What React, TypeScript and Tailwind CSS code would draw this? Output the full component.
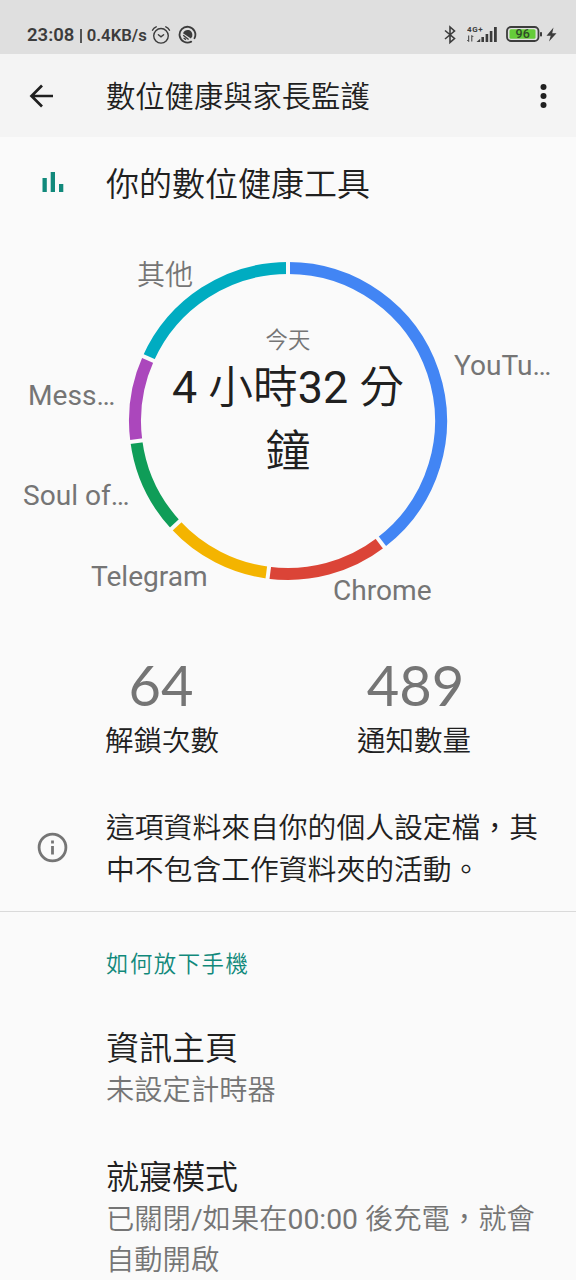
import React from 'react';

interface UsageSlice {
  name: string;
  color: string;
  start: number;
  end: number;
  labelClass: string;
}

// Angles are in degrees, clockwise from the top of the ring
const slices: UsageSlice[] = [
  { name: 'YouTu…', color: '#4285f4', start: 0, end: 142.6, labelClass: 'left-[454px] top-[117px]' },
  { name: 'Chrome', color: '#db4437', start: 142.6, end: 187.4, labelClass: 'left-[333px] top-[342px]' },
  { name: 'Telegram', color: '#f4b400', start: 187.4, end: 227.2, labelClass: 'left-[91px] top-[328px]' },
  { name: 'Soul of…', color: '#0f9d58', start: 227.2, end: 262.4, labelClass: 'left-[23px] top-[247px]' },
  { name: 'Mess…', color: '#ab47bc', start: 262.4, end: 294.1, labelClass: 'left-[28px] top-[147px]' },
  { name: '其他', color: '#00acc1', start: 294.1, end: 360, labelClass: 'left-[137px] top-[27px] font-[350]' },
];

const CENTER = 160;
const RADIUS = 153;

const pointAt = (deg: number, radius: number) => {
  const rad = (deg * Math.PI) / 180;
  return [CENTER + radius * Math.sin(rad), CENTER - radius * Math.cos(rad)];
};

const arcPath = (start: number, end: number) => {
  const [x1, y1] = pointAt(start, RADIUS);
  const [x2, y2] = pointAt(end, RADIUS);
  return `M${x1} ${y1}A${RADIUS} ${RADIUS} 0 ${end - start > 180 ? 1 : 0} 1 ${x2} ${y2}`;
};

const UsageRing: React.FC = () => (
  <svg width="320" height="320" viewBox="0 0 320 320" fill="none">
    {slices.map((slice) => (
      <path key={slice.name} d={arcPath(slice.start, slice.end)} stroke={slice.color} strokeWidth="12" />
    ))}
    {/* Gaps between the slices */}
    {slices.map((slice) => {
      const [x1, y1] = pointAt(slice.start, 144);
      const [x2, y2] = pointAt(slice.start, 162);
      return <line key={slice.name} x1={x1} y1={y1} x2={x2} y2={y2} stroke="#fafafa" strokeWidth="4" />;
    })}
  </svg>
);

const StatusBar: React.FC = () => (
  <div className="flex h-[54px] items-center justify-between bg-[#dfdfdf] pt-[15px] pr-[19px] pl-[27px] text-[#3c3c3c]">
    <div className="flex items-center">
      <span className="pt-[2px] text-[18.5px] font-semibold">23:08</span>
      <span className="ml-[6px] mt-[2px] h-[14px] w-[1.5px] bg-[#555]" />
      <span className="ml-[5px] pt-[3px] text-[16.7px] font-semibold">0.4KB/s</span>
      <svg className="ml-[4px]" width="20" height="20" viewBox="0 0 20 20" fill="none" stroke="currentColor" strokeWidth="1.4" strokeLinecap="round">
        <circle cx="10" cy="10.8" r="7.3" />
        <path d="M1.5 5.2C2.2 3.7 3.6 2.5 5.2 1.8M18.5 5.2C17.8 3.7 16.4 2.5 14.8 1.8M7.4 9.7L10 11.8L12.6 9.7" />
      </svg>
      <svg className="ml-[7px]" width="19" height="19" viewBox="0 0 19 19" fill="none" stroke="currentColor">
        <path d="M13.2 16.6A7.9 7.9 0 1 1 16.5 13.2" strokeWidth="1.8" strokeLinecap="round" />
        <path d="M5 8.2C6.2 5.6 8.4 4.6 10.6 5.1C13.4 5.8 14.8 8.4 14.2 11.6L12.9 13.4Z" fill="currentColor" stroke="none" />
        <path d="M5.2 10.2L10.6 14.6M5.6 13L8 14.6" strokeWidth="1.3" />
      </svg>
    </div>
    <div className="flex items-center">
      <svg width="12" height="20" viewBox="0 0 12 20" fill="none" stroke="currentColor" strokeWidth="1.6">
        <path d="M1 5.5L10.5 13.5L6 17.5V2L10.5 6L1 14" />
      </svg>
      <svg className="ml-[11px]" width="31" height="20" viewBox="0 0 31 20" fill="currentColor">
        <text x="0" y="6.8" fontSize="8" fontWeight="700" fontFamily="Roboto, sans-serif" textLength="15.5">4G+</text>
        <path d="M9.5 17L13.2 13.8V17ZM14.4 12H17V17H14.4ZM18.6 9H21.2V17H18.6ZM22.8 6H25.4V17H22.8ZM27 2H29.8V17H27Z" />
        <path d="M1.7 16.5V10.5M1.7 16.5L0.3 15M4.8 10.5V16.5M4.8 10.5L6.3 12" stroke="currentColor" strokeWidth="1" fill="none" />
      </svg>
      <svg className="ml-[8px]" width="37" height="18" viewBox="0 0 37 18">
        <rect x="1" y="1" width="31.5" height="14" rx="4" fill="none" stroke="currentColor" strokeWidth="1.8" />
        <rect x="3.5" y="3.3" width="26" height="9.4" rx="1.5" fill="#65cc39" />
        <rect x="34" y="6" width="2" height="4.5" rx="0.8" fill="currentColor" />
        <text x="16.7" y="12.4" textAnchor="middle" fontSize="12.5" fontWeight="500" fontFamily="Roboto, sans-serif" fill="#2f4a28">96</text>
      </svg>
      <svg className="ml-[3px]" width="11" height="16" viewBox="0 0 11 16" fill="currentColor">
        <path d="M7.5 0.5L0.5 8.8H4.7L3 14.5L10.5 6.2H6.2Z" />
      </svg>
    </div>
  </div>
);

interface StatProps {
  value: string;
  label: string;
  valueClass: string;
}

const Stat: React.FC<StatProps> = ({ value, label, valueClass }) => (
  <div className="flex w-[252px] flex-col items-center">
    <span className={`font-[Lato,sans-serif] text-[56px] leading-[64px] text-[#757575] ${valueClass}`}>{value}</span>
    <span className="pt-[4px] text-[28.5px] leading-[42px] font-[350]">{label}</span>
  </div>
);

interface SettingItemProps {
  title: string;
  summary: React.ReactNode;
}

const SettingItem: React.FC<SettingItemProps> = ({ title, summary }) => (
  <div className="pr-[30px] pl-[106px]">
    <h3 className="text-[33px] leading-[43px] font-[350]">{title}</h3>
    <div className="text-[28.3px] leading-[41px] font-[350] text-[#757575]">{summary}</div>
  </div>
);

const App: React.FC = () => {
  return (
    <div className="h-[1280px] w-[576px] overflow-hidden bg-[#fafafa] font-[Roboto,'Noto_Sans_CJK_TC',sans-serif] text-[#202020]">
      <StatusBar />

      <header className="flex h-[83px] items-center bg-[#f4f4f4] pr-[29px] pl-[29px]">
        <svg width="25" height="24" viewBox="0 0 25 24" fill="none" stroke="currentColor" strokeWidth="2.7">
          <path d="M24 12H3M13 1.5L2.5 12L13 22.5" />
        </svg>
        <h1 className="ml-[52px] flex-1 pt-[5px] text-[29.3px] font-[350]">數位健康與家長監護</h1>
        <svg width="8" height="26" viewBox="0 0 8 26" fill="currentColor">
          <circle cx="4.5" cy="4" r="3" />
          <circle cx="4.5" cy="13" r="3" />
          <circle cx="4.5" cy="22" r="3" />
        </svg>
      </header>

      <div className="flex h-[92px] items-center pl-[42px]">
        <svg width="22" height="22" viewBox="0 0 22 22" fill="#11897b">
          <path d="M0.5 6H4.8V20H0.5ZM8.7 0H13V20H8.7ZM17 12H21.3V20H17Z" />
        </svg>
        <h2 className="ml-[42px] pt-[3px] text-[33px] font-[350]">你的數位健康工具</h2>
      </div>

      <section className="relative flex h-[424px] justify-center pt-[32px]">
        <UsageRing />
        <div className="absolute top-[95px] left-[168px] w-[240px] text-center font-[350]">
          <div className="text-[22.4px] leading-[33px] text-[#757575]">今天</div>
          <div className="-mt-px text-[44.8px] leading-[64px]">
            <div><span className="font-normal">4 </span>小時<span className="font-normal">32 </span>分</div>
            <div>鐘</div>
          </div>
        </div>
        {slices.map((slice) => (
          <span key={slice.name} className={`absolute text-[28.1px] leading-[40px] whitespace-nowrap text-[#757575] ${slice.labelClass}`}>
            {slice.name}
          </span>
        ))}
      </section>

      <section className="flex justify-center">
        <Stat value="64" label="解鎖次數" valueClass="mr-[2px]" />
        <Stat value="489" label="通知數量" valueClass="ml-[3px]" />
      </section>

      <section className="flex h-[149px] items-center border-b border-[#dadada] pt-[20px] pl-[37px]">
        <svg width="31" height="31" viewBox="0 0 31 31" fill="none" stroke="#757575" strokeWidth="2.8">
          <circle cx="15.5" cy="15.5" r="13.4" />
          <path d="M15.5 14V22.5M15.5 8.5V11.5" />
        </svg>
        <p className="ml-[38px] w-[440px] pt-[4px] text-[28.8px] leading-[42px] font-[350]">這項資料來自你的個人設定檔，其中不包含工作資料夾的活動。</p>
      </section>

      <section className="pt-[35px]">
        <div className="pl-[106px] text-[22.4px] leading-[34px] font-[350] tracking-[1.5px] text-[#11897b]">如何放下手機</div>
        <div className="flex flex-col gap-[45px] pt-[46px]">
          <SettingItem title="資訊主頁" summary="未設定計時器" />
          <SettingItem
            title="就寢模式"
            summary={
              <>
                <p>已關閉<span className="font-normal">/</span>如果在<span className="font-normal">00:00 </span>後充電，就會</p>
                <p>自動開啟</p>
              </>
            }
          />
        </div>
      </section>
    </div>
  );
};

export default App;
